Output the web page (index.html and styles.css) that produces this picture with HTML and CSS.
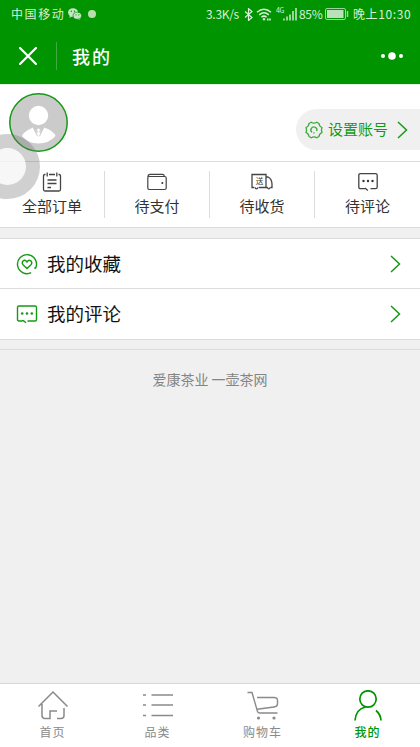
FILE: index.html
```html
<!DOCTYPE html>
<html lang="zh-CN">
<head>
<meta charset="utf-8">
<title>我的</title>
<link rel="stylesheet" href="styles.css">
</head>
<body>
<div class="app">
  <header class="top">
    <div class="status">
      <span class="carrier">中国移动</span>
      <svg class="wechat" width="14" height="12" viewBox="0 0 14 12"><ellipse cx="5" cy="4.5" rx="5" ry="4.2" fill="#c5e6c5"/><path d="M2 7l-.6 3L4 8.300zM11 10l1.500 2-3-1z" fill="#c5e6c5"/><ellipse cx="9.300" cy="7.700" rx="4.200" ry="3.500" fill="#c5e6c5" stroke="#009400" stroke-width=".7"/><g fill="#009400"><circle cx="3.300" cy="3.300" r=".7"/><circle cx="6.500" cy="3.300" r=".7"/><circle cx="8" cy="6.800" r=".6"/><circle cx="10.800" cy="6.800" r=".6"/></g></svg>
      <i class="dot"></i>
      <span class="speed">3.3K/s</span>
      <svg class="bt" width="10" height="13" viewBox="0 0 10 13"><path d="M1 3.500l7 6L4.500 12.500V.7L8 3.500l-7 6" fill="none" stroke="#d8efd8" stroke-width="1.200"/></svg>
      <svg class="wifi" width="17" height="13" viewBox="0 0 17 13"><g fill="none" stroke="#d8efd8" stroke-width="1.500"><path d="M1 4.300Q8 -1.800 15 4.300M3.200 6.900Q8 2.700 12.800 6.900M5.400 9.300Q8 7 10.600 9.300"/></g><circle cx="8" cy="11.300" r="1.200" fill="#d8efd8"/><path d="M11 11.500h4" stroke="#d8efd8" stroke-width="1.800" stroke-dasharray="1.600 .6"/></svg>
      <span class="net">4G</span>
      <svg class="signal" width="14" height="13" viewBox="0 0 14 13"><path d="M1 12.500v-2M4 12.500v-4M7 12.500v-6M10 12.500V3M13 12.500V0" stroke="#d8efd8" stroke-width="1.400"/></svg>
      <span class="pct">85%</span>
      <svg class="battery" width="24" height="12" viewBox="0 0 24 12"><rect x=".5" y=".5" width="20" height="11" rx="1.500" fill="none" stroke="#9bd49b"/><path d="M2 2h16.500v8H2z" fill="#b9e0b9"/><path d="M22.500 3v6" stroke="#9bd49b" stroke-width="1.500"/></svg>
      <span class="time">晚上10:30</span>
    </div>
    <div class="titlebar">
      <svg width="18" height="18" viewBox="0 0 18 18"><path d="M1 1l16 16M17 1L1 17" stroke="#fff" stroke-width="2.200" stroke-linecap="round"/></svg>
      <i class="split"></i>
      <h1>我的</h1>
      <svg class="more" width="22" height="8" viewBox="0 0 22 8"><g fill="#fff"><circle cx="2" cy="4" r="2"/><circle cx="11" cy="4" r="3.800"/><circle cx="20" cy="4" r="2"/></g></svg>
    </div>
  </header>

  <section class="profile">
    <svg class="avatar" width="60" height="60" viewBox="0 0 60 60"><circle cx="30.500" cy="30.500" r="28.700" fill="#cbcbcb" stroke="#159a15" stroke-width="1.500"/><circle cx="30.500" cy="23.500" r="9.700" fill="#fff"/><path d="M14 44q1-4 11-8.500l5.500 6.500 5.500-6.500q10 3.500 11.500 8.500Q41 51.500 30.500 51.500T14 44z" fill="#fff"/><path d="M25.500 35.500l4 8M35.500 35.500l-4 8" stroke="#cbcbcb" stroke-width="1.500"/><path d="M28.500 37.500l2-1.200 2 1.200-1 2 1 2.500-2 2.500-2-2.500 1-2.500z" fill="#fff" stroke="#cbcbcb" stroke-width=".5"/></svg>
    <a class="account">
      <svg width="18" height="18" viewBox="0 0 18 18"><path d="M6.300 1.200Q9 3.200 11.700 1.200L14 2.500Q14.200 5.300 17 6.500Q15.800 9 17 11.500Q14.200 12.700 14 15.500L11.700 16.800Q9 14.800 6.300 16.800L4 15.500Q3.800 12.700 1 11.500Q2.200 9 1 6.500Q3.800 5.300 4 2.500Z" fill="none" stroke="#37aa37" stroke-width="1.300" stroke-linejoin="round"/><path d="M7 11.300A3 3 0 1 1 11.700 10M8.300 11.800l1.200.2" fill="none" stroke="#37aa37" stroke-width="1.300"/></svg>
      <span>设置账号</span>
      <svg class="arrow" width="11" height="18" viewBox="0 0 11 18"><path d="M1 1l8.500 8L1 17" fill="none" stroke="#159a15" stroke-width="1.500"/></svg>
    </a>
  </section>

  <nav class="orders">
    <a><svg width="20" height="20" viewBox="0 0 20 20"><g fill="none" stroke="#444" stroke-width="1.300"><path d="M3.500 2.500H2.800Q1.500 2.500 1.500 4v13.500Q1.500 19 3 19h14q1.500 0 1.500-1.500V4q0-1.500-1.300-1.500h-.7M7 2.500h6M5.200.5v4M14.800.5v4M5.500 8h9M5.500 11.500h9M5.500 15.500h3.500"/></g></svg><span>全部订单</span></a>
    <a><svg width="20" height="20" viewBox="0 0 20 20"><g fill="none" stroke="#444" stroke-width="1.200"><rect x=".8" y="4.500" width="18.400" height="13" rx="1.500"/><path d="M1 5q0-2.700 2-2.700h12.500q1.700 0 1.700 2"/></g><circle cx="15.300" cy="11" r="1" fill="#333"/></svg><span>待支付</span></a>
    <a><svg width="22" height="20" viewBox="0 0 22 20"><g fill="none" stroke="#444" stroke-width="1.300"><path d="M3 15.500H1v-13h14v13H8M15 5h2q4 2 4 7.500v3h-1.500M15 15.500h1.500"/><path d="M3.700 15.200q1.800 3.500 3.600 0M16.200 15.200q1.600 3.500 3.200 0"/></g><text x="4.700" y="11.700" class="truck">送</text></svg><span>待收货</span></a>
    <a><svg width="20" height="20" viewBox="0 0 20 20"><path d="M7 16.700H2.500Q.8 16.700.8 15V3.300Q.8 1.600 2.500 1.600h15q1.700 0 1.700 1.700V15q0 1.700-1.700 1.700h-5M7 16l2.800 2.500" fill="none" stroke="#444" stroke-width="1.300"/><g fill="#333"><circle cx="5.500" cy="9" r="1.200"/><circle cx="10" cy="9" r="1.200"/><circle cx="14.500" cy="9" r="1.200"/></g></svg><span>待评论</span></a>
  </nav>

  <section class="list">
    <a>
      <svg width="22" height="22" viewBox="0 0 22 22"><g fill="none" stroke="#159a15" stroke-width="1.400"><path d="M15.200 19.700A9.500 9.500 0 1 1 19.600 15.200L18.200 14.800M11 15.500L7 11.700Q5.400 9.500 7.200 7.800 9.300 6.500 11 9q1.700-2.500 3.800-1.200 1.800 1.700.2 3.900z"/></g></svg>
      <span>我的收藏</span>
      <svg class="arrow" width="11" height="18" viewBox="0 0 11 18"><path d="M1 1l8.500 8L1 17" fill="none" stroke="#159a15" stroke-width="1.500"/></svg>
    </a>
    <a>
      <svg width="22" height="22" viewBox="0 0 22 22"><path d="M6 18H3Q1.500 18 1.500 16.500V4.500Q1.500 3 3 3h16q1.500 0 1.500 1.500v12Q20.500 18 19 18h-7.500M6 17.700h1.500l2.500 2" fill="none" stroke="#159a15" stroke-width="1.400"/><g fill="#159a15"><circle cx="6.200" cy="10.500" r="1.300"/><circle cx="11" cy="10.500" r="1.300"/><circle cx="15.800" cy="10.500" r="1.300"/></g></svg>
      <span>我的评论</span>
      <svg class="arrow" width="11" height="18" viewBox="0 0 11 18"><path d="M1 1l8.500 8L1 17" fill="none" stroke="#159a15" stroke-width="1.500"/></svg>
    </a>
  </section>

  <footer class="copy">爱康茶业 一壶茶网</footer>

  <nav class="tabs">
    <a><svg width="32" height="32" viewBox="0 0 32 32"><path d="M1.500 16.500L16 2l14.500 14.500M5 14v11.500Q5 28.500 8 28.500h5V21h7M20 28.500h4q3 0 3-3V18" fill="none" stroke="#8a8a8a" stroke-width="1.500"/></svg><span>首页</span></a>
    <a><svg width="32" height="32" viewBox="0 0 32 32"><path d="M1 5h3M9.500 5H31M1 15h3M9.500 15H31M1 25.500h3M9.500 25.500H31" stroke="#8a8a8a" stroke-width="1.600"/></svg><span>品类</span></a>
    <a><svg width="32" height="32" viewBox="0 0 32 32"><path d="M.5 2.500H5L10.500 21.500Q11 23 13 23h17.500M10 7.500h17q3.500 0 3.500 3V14q0 2.500-3.500 3L10 19.300" fill="none" stroke="#8a8a8a" stroke-width="1.400"/><circle cx="11.500" cy="28" r="1.600" fill="#8a8a8a"/><circle cx="27" cy="28" r="1.600" fill="#8a8a8a"/></svg><span>购物车</span></a>
    <a class="on"><svg width="32" height="32" viewBox="0 0 32 32"><circle cx="16" cy="9" r="8.200" fill="none" stroke="#009400" stroke-width="1.700"/><path d="M3 30.500Q4 19 13.500 17M24 20.500q4.700 4 5 10" fill="none" stroke="#009400" stroke-width="1.700"/></svg><span>我的</span></a>
  </nav>
  <i class="assist"></i>
</div>
</body>
</html>
```
FILE: styles.css
```css
* { box-sizing: border-box; }
body {
  margin: 0;
  font-family: "Noto Sans CJK SC", "Noto Sans", sans-serif;
  background: #f0f0f0;
}
svg { display: block; flex: none; }
.app {
  position: relative;
  width: 420px;
  height: 747px;
  overflow: hidden;
  display: flex;
  flex-direction: column;
}
.top { height: 84px; background: #009400; color: #fff; flex: none; }
.status {
  height: 28px;
  display: flex;
  align-items: center;
  padding-left: 11px;
  font-size: 12px;
  line-height: 28px;
  white-space: nowrap;
  color: #d8efd8;
}
.status span { flex: none; }
.carrier { width: 57px; letter-spacing: 1.6px; }
.dot { width: 8px; height: 8px; border-radius: 50%; background: #b9dcb0; margin: 0 110px 0 6px; flex: none; }
.speed { width: 38px; letter-spacing: -.3px; }
.wifi { margin-left: 2px; }
.net { width: 10px; margin-left: 3px; font-size: 7px; line-height: 10px; align-self: flex-start; margin-top: 5px; letter-spacing: -.5px; }
.signal { margin-left: -3px; }
.pct { width: 26px; margin-left: 2px; letter-spacing: -.3px; }
.time { margin-left: 4px; letter-spacing: .6px; }
.titlebar { height: 56px; display: flex; align-items: center; padding: 0 17px 0 19px; }
.split { width: 1px; height: 28px; background: #43a943; margin: 0 15px 0 19px; }
h1 { margin: 0; font-size: 18px; font-weight: 500; line-height: 24px; letter-spacing: 2px; }
.more { margin-left: auto; }

.profile {
  height: 78px;
  flex: none;
  background: #fff;
  border-top: 1px solid #dff1df;
  border-bottom: 1px solid #dcdcdc;
  display: flex;
  justify-content: space-between;
  padding: 7px 0 0 8px;
}
.account {
  width: 124px;
  height: 41px;
  margin-top: 17px;
  padding-left: 9px;
  background: #f0f0f0;
  border-radius: 21px 0 0 21px;
  display: flex;
  align-items: center;
  font-size: 15px;
  color: #159a15;
}
.account span { margin: -2px 0 0 5px; }
.account .arrow { margin-left: 9px; }

.orders {
  height: 66px;
  flex: none;
  background: #fff;
  border-bottom: 1px solid #dcdcdc;
  display: grid;
  grid-template-columns: repeat(4, 1fr);
  align-items: center;
}
.orders a {
  height: 47px;
  display: flex;
  flex-direction: column;
  align-items: center;
  border-right: 1px solid #dcdcdc;
  font-size: 15px;
  line-height: 22px;
  color: #333;
}
.orders a:last-child { border-right: 0; }
.orders svg { margin-top: 1px; }
.orders span { margin-top: 3px; }
.truck { font-size: 7.500px; fill: #333; }

.list { margin-top: 10px; flex: none; background: #fff; border-top: 1px solid #dcdcdc; }
.list a {
  height: 50px;
  border-bottom: 1px solid #dcdcdc;
  display: flex;
  align-items: center;
  padding: 0 19px 0 16px;
  font-size: 18.500px;
  color: #111;
}
.list a:last-child { height: 51px; }
.list span { margin: -2px 0 0 9px; }
.list .arrow { margin-left: auto; }

.copy {
  margin-top: 9px;
  flex: 1;
  border-top: 1px solid #dcdcdc;
  padding-top: 18px;
  text-align: center;
  font-size: 14px;
  line-height: 22px;
  color: #858585;
}

.tabs {
  height: 64px;
  flex: none;
  background: #fff;
  border-top: 1px solid #d8d8d8;
  display: grid;
  grid-template-columns: repeat(4, 1fr);
}
.tabs a {
  display: flex;
  flex-direction: column;
  align-items: center;
  padding-top: 6px;
  font-size: 12px;
  line-height: 20px;
  letter-spacing: 1px;
  color: #8a8a8a;
}
.tabs .on { color: #009400; font-weight: 500; }
.assist {
  position: absolute;
  left: -25px;
  top: 134px;
  width: 65px;
  height: 65px;
  border-radius: 50%;
  border: 14px solid rgba(110, 110, 110, .32);
  background: rgba(245, 245, 245, .8);
  background-clip: padding-box;
}
```
